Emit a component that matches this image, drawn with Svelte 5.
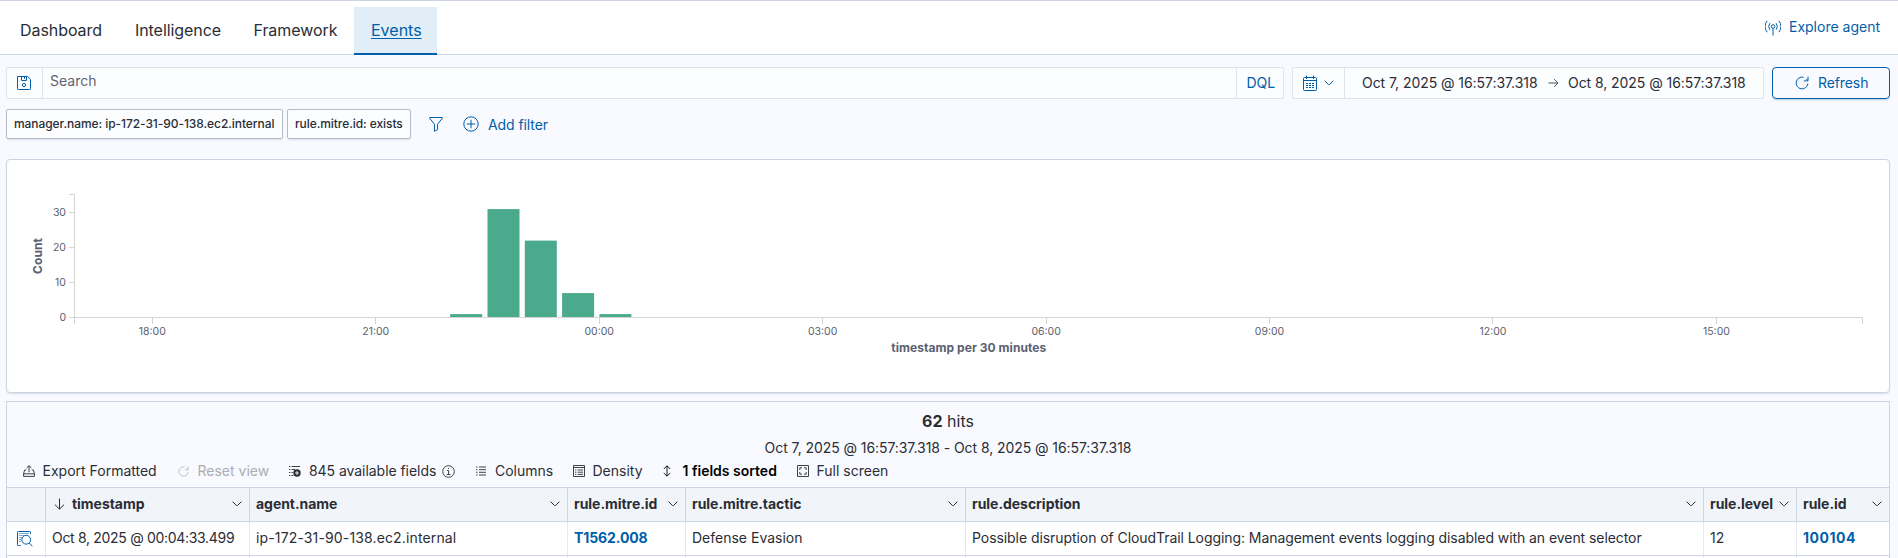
<script>
  const tabs = [
    { name: 'Dashboard', w: 115 },
    { name: 'Intelligence', w: 118.5 },
    { name: 'Framework', w: 116.5 },
    { name: 'Events', w: 83 }
  ];
  const filters = [
    { text: 'manager.name: ip-172-31-90-138.ec2.internal', w: 277 },
    { text: 'rule.mitre.id: exists', w: 124 }
  ];
  const from = 'Oct 7, 2025 @ 16:57:37.318';
  const to = 'Oct 8, 2025 @ 16:57:37.318';

  const baseline = 157;
  const yTicks = [0, 10, 20, 30].map((v) => ({ v, y: baseline - Math.round(v * 3.5) + 0.5 }));
  const xTicks = ['18:00', '21:00', '00:00', '03:00', '06:00', '09:00', '12:00', '15:00'].map((label, i) => ({
    label,
    x: 145.3 + i * 223.45
  }));
  const bars = [1, 31, 22, 7, 1].map((v, i) => ({ x: 443.2 + i * 37.3, h: v * 3.5 }));

  const columns = [
    { name: 'timestamp', value: 'Oct 8, 2025 @ 00:04:33.499', sorted: true, ls: -0.31 },
    { name: 'agent.name', value: 'ip-172-31-90-138.ec2.internal', ls: 0.14 },
    { name: 'rule.mitre.id', value: 'T1562.008', link: true, ls: -0.1 },
    { name: 'rule.mitre.tactic', value: 'Defense Evasion', ls: 0 },
    {
      name: 'rule.description',
      value: 'Possible disruption of CloudTrail Logging: Management events logging disabled with an event selector',
      ls: -0.067
    },
    { name: 'rule.level', value: '12', ls: 0 },
    { name: 'rule.id', value: '100104', link: true, ls: 0.5 }
  ];
</script>

{#snippet chevron(w)}
  <svg class="chev" width={w} height="6" viewBox="0 0 10 6"><path d="M.6.7 4.6 4.6a.6.6 0 0 0 .8 0L9.4.7" /></svg>
{/snippet}

{#snippet refreshIcon(s)}
  <svg width={s} height={s} viewBox="0 0 14 14"><path d="M8.6 1.3A5.9 5.9 0 1 0 12.9 7.6M13 .6V4.3a.6.6 0 0 1-.6.6H8.8M13 4.9 11.3 2.9" /></svg>
{/snippet}

<div class="page">
  <header>
    <nav>
      {#each tabs as tab}
        <button class="tab" class:active={tab.name === 'Events'} style:width="{tab.w}px"><span>{tab.name}</span></button>
      {/each}
    </nav>
    <a class="explore" href="#agent">
      <svg width="16" height="16" viewBox="0 0 16 16">
        <circle cx="8" cy="6.5" r="1.8" /><path d="M8 8.3V15.5M4.9 3.2a5.4 5.4 0 0 0 0 6.6M11.1 3.2a5.4 5.4 0 0 1 0 6.6M2.2.8a8.6 8.6 0 0 0 0 11.4M13.8.8a8.6 8.6 0 0 1 0 11.4" />
      </svg>
      <span>Explore agent</span>
    </a>
  </header>

  <div class="query">
    <div class="search">
      <button class="save" aria-label="Saved queries">
        <svg width="14" height="14" viewBox="0 0 14 14">
          <path d="M.5.5H10.6L13.5 3.4V12.8a.7.7 0 0 1-.7.7H1.2a.7.7 0 0 1-.7-.7ZM4.5.5V4a.5.5 0 0 0 .5.5H9a.5.5 0 0 0 .5-.5V.5M7.5 1V2.8" />
          <circle cx="7" cy="9" r="1.6" />
        </svg>
      </button>
      <div class="input">Search</div>
      <button class="dql">DQL</button>
    </div>
    <div class="dates">
      <button class="quick" aria-label="Quick select">
        <svg width="14" height="16" viewBox="0 0 14 16">
          <rect x=".5" y="2.5" width="13" height="13" rx="1" /><path d="M.5 5.5H13.5M3.5 .5V4M10.5 .5V4" />
          <path d="M3 8.5H11M3 10.5H11M3 12.5H11" stroke-dasharray="2 1" />
        </svg>
        {@render chevron(10)}
      </button>
      <span class="from">{from}</span>
      <svg class="arrow" width="11" height="10" viewBox="0 0 11 10"><path d="M.5 5H10M6.2 1.2 10 5 6.2 8.8" /></svg>
      <span class="to">{to}</span>
    </div>
    <button class="refresh">{@render refreshIcon(14)}<span>Refresh</span></button>
  </div>

  <div class="filters">
    {#each filters as f}<span class="pill" style:width="{f.w}px">{f.text}</span>{/each}
    <svg class="funnel" width="14" height="15" viewBox="0 0 14 15"><path d="M.9.5H13.1a.4.4 0 0 1 .3.7L8.5 7.3V12.6L5.5 14.3V7.3L.6 1.2A.4.4 0 0 1 .9.5Z" /></svg>
    <svg class="plus" width="16" height="16" viewBox="0 0 16 16"><circle cx="8" cy="8" r="7.2" /><path d="M3.8 8H12.2M8 3.8V12.2" /></svg>
    <span class="add">Add filter</span>
  </div>

  <section class="chart">
    <svg width="1882" height="232" viewBox="0 0 1882 232">
      {#each bars as b}
        <rect class="bar" x={b.x} y={baseline - b.h + 0.6} width="32" height={b.h - 0.6} />
      {/each}
      <path class="axis" d="M62 34.5H67.5V164M67 157.5H1855.5V164" />
      {#each yTicks as t}
        <path class="axis" d="M62 {t.y}H67" />
        <text class="lbl" x="59" y={t.y + 3.8} text-anchor="end">{t.v}</text>
      {/each}
      {#each xTicks as t}
        <path class="axis" d="M{Math.floor(t.x) + 0.5} 158V164" />
        <text class="lbl" x={t.x} y="175" text-anchor="middle">{t.label}</text>
      {/each}
      <text class="ttl" transform="translate(35 96) rotate(-90)" text-anchor="middle">Count</text>
      <text class="ttl" x="961.8" y="192" text-anchor="middle">timestamp per 30 minutes</text>
    </svg>
  </section>

  <section class="results">
    <div class="hits"><b>62</b> hits</div>
    <div class="range">{from} - {to}</div>
    <div class="tools">
      <button style:width="155px">
        <svg width="12" height="12" viewBox="0 0 12 12"><path d="M3.2 5H1.6L.6 8.5V11.4H11.4V8.5L10.4 5H8.8M.6 8.8H11.4M6 7.2V.8M3.6 3 6 .7 8.4 3" /></svg>
        <span>Export Formatted</span>
      </button>
      <button class="off" style:width="111.5px">{@render refreshIcon(11)}<span>Reset view</span></button>
      <button style:width="187px">
        <svg width="12" height="12" viewBox="0 0 12 12">
          <path d="M0 1.5H1.4M2.6 1.5H11M0 4.5H1.4M2.6 4.5H6M0 7.5H1.4M2.6 7.5H4M0 10.5H1.4M2.6 10.5H4.4" /><circle cx="8" cy="8" r="3.7" fill="currentColor" stroke="none" /><path d="M6 8H10M8 6V10" stroke="#f9faff" />
        </svg>
        <span class="fields">845 available fields</span>
        <svg class="info" width="13" height="13" viewBox="0 0 13 13"><circle cx="6.5" cy="6.5" r="5.8" /><path d="M5 5.5H6.6V9.5M4.8 9.5H8.4M6 3.4H7.1" /></svg>
      </button>
      <button style:width="96.5px">
        <svg width="10" height="10" viewBox="0 0 10 10"><path d="M0 1H1.5M3 1H10M0 3.7H1.5M3 3.7H10M0 6.3H1.5M3 6.3H10M0 9H1.5M3 9H10" /></svg>
        <span class="wide">Columns</span>
      </button>
      <button style:width="90px">
        <svg width="12" height="12" viewBox="0 0 12 12"><path d="M.5.5H11.5V11.5H.5ZM.5 2.5H11.5M2 5H3.4M4.6 5H10M2 7.2H3.4M4.6 7.2H10M2 9.4H3.4M4.6 9.4H10" /></svg>
        <span>Density</span>
      </button>
      <button class="sorted" style:width="134px">
        <svg width="8" height="12" viewBox="0 0 8 12"><path d="M4 1V11M.8 4 4 .8 7.2 4M.8 8 4 11.2 7.2 8" /></svg>
        <span>1 fields sorted</span>
      </button>
      <button>
        <svg width="12" height="12" viewBox="0 0 12 12"><path d="M.5.5H11.5V11.5H.5ZM2.8 5V2.8H5M7 2.8H9.2V5M9.2 7V9.2H7M5 9.2H2.8V7" /></svg>
        <span>Full screen</span>
      </button>
    </div>
    <div class="grid head">
      <div></div>
      {#each columns as c}
        <div class="cell">
          {#if c.sorted}<svg class="down" width="11" height="12" viewBox="0 0 11 12"><path d="M5.5 .5V11M.9 6.6 5.5 11.1 10.1 6.6" /></svg>{/if}
          <b>{c.name}</b>{@render chevron(10)}
        </div>
      {/each}
    </div>
    <div class="grid row">
      <div class="inspect">
        <svg width="16" height="16" viewBox="0 0 16 16">
          <path d="M3.6 14.5H1.3a.8.8 0 0 1-.8-.8V1.3a.8.8 0 0 1 .8-.8H12.7a.8.8 0 0 1 .8.8V3" />
          <path d="M2.5 2.5H12M2.5 4.5H7M2.5 6.5H5M2.5 8.5H4M2.5 10.5H4" stroke-dasharray="1 1" />
          <circle cx="9.2" cy="8.7" r="4.4" /><path d="M12.3 12 15.4 15.3" />
        </svg>
      </div>
      {#each columns as c}
        <div class="cell" class:link={c.link} style:letter-spacing="{c.ls}px">{c.value}</div>
      {/each}
    </div>
    <div class="grid row next">
      <div></div>
      {#each columns as c}<div class="cell"></div>{/each}
    </div>
  </section>
</div>

<style>
  :global(body) { background: #f9faff; overflow: hidden; }
  .page {
    width: 1898px; height: 558px; overflow: hidden; box-sizing: border-box;
    font: 14px/20px Inter, sans-serif; color: #2a2d35; background: #f9faff;
  }
  .page :global(*) { box-sizing: border-box; }
  button { font: inherit; color: inherit; background: none; border: 0; padding: 0; margin: 0; text-align: left; letter-spacing: inherit; }
  svg { display: block; flex: none; fill: none; stroke: currentColor; }
  header { height: 55px; background: #fff; border-top: 1px solid #cdd3e2; border-bottom: 1px solid #ccd6e5; display: flex; justify-content: space-between; }
  nav { display: flex; padding: 6px 0 0 4px; height: 54px; }
  .tab { height: 48px; padding: 0 16px; font-size: 16px; line-height: 36px; letter-spacing: -0.07px; border-bottom: 2px solid transparent; }
  .tab.active { color: #005eaa; background: #e1eef7; border-bottom-color: #005eaa; letter-spacing: 0; padding-left: 17px; }
  .active span { text-decoration: underline; text-underline-offset: 2px; }
  .explore { display: flex; gap: 8px; padding: 16px 18px 0 0; color: #005eaa; text-decoration: none; height: 40px; }
  .explore svg { margin-top: 3px; }
  .query { display: flex; height: 32px; margin: 12px 8px 0 6px; }
  .search { display: flex; width: 1278px; border: 1px solid #e0e3eb; background: #fcfdff; border-radius: 2px; }
  .save { width: 36px; border-right: 1px solid #e0e3eb; color: #005eaa; padding-left: 10px; }
  .input { flex: 1; padding: 3px 7px; color: #5f6570; }
  .dql { width: 47px; border-left: 1px solid #e0e3eb; padding-left: 9.5px; color: #005eaa; }
  .dates { display: flex; align-items: center; width: 472px; margin-left: 8px; border: 1px solid #e0e3eb; background: #fcfdff; border-radius: 2px; letter-spacing: -0.06px; }
  .quick { width: 52px; height: 30px; display: flex; align-items: center; gap: 7px; padding-left: 10px; color: #005eaa; border-right: 1px solid #e0e3eb; }
  .from { width: 202.5px; padding-left: 17px; white-space: nowrap; }
  .arrow { color: #4b505a; }
  .to { padding-left: 9.5px; white-space: nowrap; }
  .refresh { display: flex; align-items: center; gap: 9px; width: 118px; margin-left: 8px; padding-left: 22px; border: 1px solid #005eaa; border-radius: 4px; color: #005eaa; letter-spacing: -0.1px; box-shadow: 0 2px 2px -1px rgba(0, 94, 170, .3); }
  .filters { display: flex; align-items: center; height: 30px; margin: 10px 0 0 6px; color: #005eaa; }
  .pill { height: 30px; padding: 0 7px; margin-right: 4px; border: 1px solid #b6bccb; border-radius: 2px; background: #fcfdff; color: #2a2d35; font-size: 12px; font-weight: 500; line-height: 28px; letter-spacing: -0.065px; white-space: nowrap; box-shadow: 0 2px 2px -1px rgba(150, 160, 185, .3); }
  .funnel { margin-left: 14px; }
  .plus { margin-left: 20px; }
  .add { margin-left: 9px; padding-top: 2px; letter-spacing: -0.08px; }
  .chart { width: 1884px; height: 234px; margin: 20px 0 0 6px; background: #fff; border: 1px solid #ccd3e2; border-radius: 4px; box-shadow: 0 2px 2px -1px rgba(150, 165, 195, .35); }
  .bar { fill: #4aaa8c; stroke: none; }
  .axis { stroke: #d4d4d4; }
  .lbl { font-size: 10.5px; fill: #5a6070; stroke: none; }
  .ttl { font-size: 12px; font-weight: 700; letter-spacing: .05px; fill: #5a6070; stroke: none; }
  .results { width: 1884px; margin: 8px 0 0 6px; border: 1px solid #ccd6e5; border-bottom: 0; text-align: center; }
  .hits { font-size: 16px; line-height: 24px; padding-top: 7px; height: 36px; }
  .hits b { font-weight: 700; }
  .range { height: 21px; letter-spacing: -0.07px; }
  .tools { display: flex; height: 28px; padding-left: 15.5px; }
  .tools button { display: flex; align-items: center; gap: 8px; height: 24px; white-space: nowrap; }
  .tools svg { stroke-width: .9; }
  .tools .fields { letter-spacing: -0.05px; }
  .tools .info { margin-left: -2px; }
  .tools .wide { margin-left: 1px; }
  .tools .off { color: #abadb3; gap: 9px; }
  .tools .sorted { color: #000; font-weight: 600; gap: 12px; }
  .grid { display: grid; grid-template-columns: 38px 204px 318px 118px 280px 738px 93px 93px; height: 34px; text-align: left; border-top: 1px solid #ccd6e5; }
  .head { background: #f1f5f9; letter-spacing: -0.04px; }
  .row { background: #fff; }
  .cell { display: flex; align-items: center; padding: 0 0 1px 6px; border-left: 1px solid #e6e9f0; white-space: nowrap; }
  .head .cell { border-color: #ccd3e2; }
  .head .chev { margin: 0 7px 0 auto; }
  .down { margin: 0 7px 0 2px; }
  .link { color: #005eaa; font-weight: 700; }
  .inspect { display: flex; align-items: center; padding-left: 10px; color: #005eaa; }
</style>
